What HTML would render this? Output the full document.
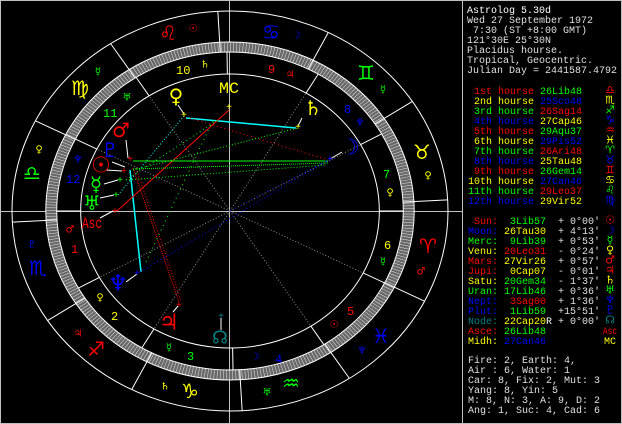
<!DOCTYPE html>
<html><head><meta charset="utf-8"><style>
html,body{margin:0;padding:0;background:#000;}
svg{display:block}
text{white-space:pre}
.p{font-family:"Liberation Mono",monospace;font-size:10px}
.g{font-family:"DejaVu Sans",sans-serif;text-anchor:middle;dominant-baseline:central}
</style></head><body>
<svg width="622" height="424" viewBox="0 0 622 424" xmlns="http://www.w3.org/2000/svg" xml:space="preserve">
<rect x="0" y="0" width="622" height="424" fill="#000"/>
<rect x="0.5" y="0.5" width="621" height="423" fill="none" stroke="#c0c0c0"/>
<line x1="462.5" y1="0" x2="462.5" y2="424" stroke="#c0c0c0"/>
<line x1="0" y1="211.5" x2="462" y2="211.5" stroke="#c0c0c0"/>
<line x1="229.5" y1="0" x2="229.5" y2="424" stroke="#c0c0c0"/>

<g transform="translate(230,211) scale(1.09,1)" fill="none">
<circle r="164" stroke="#686868" stroke-width="10" vector-effect="non-scaling-stroke"/>
<circle r="164" stroke="#e0e0e0" stroke-width="10" stroke-dasharray="0.5 2.362"/>
<g stroke="#fff" stroke-width="1">
<circle r="200" vector-effect="non-scaling-stroke"/>
<circle r="169" vector-effect="non-scaling-stroke"/>
<circle r="159" vector-effect="non-scaling-stroke"/>
<circle r="137" vector-effect="non-scaling-stroke"/>
<line x1="159" x2="200" transform="rotate(26.8)" vector-effect="non-scaling-stroke"/>
<line x1="159" x2="200" transform="rotate(-3.2)" vector-effect="non-scaling-stroke"/>
<line x1="159" x2="200" transform="rotate(-33.2)" vector-effect="non-scaling-stroke"/>
<line x1="159" x2="200" transform="rotate(-63.2)" vector-effect="non-scaling-stroke"/>
<line x1="159" x2="200" transform="rotate(-93.2)" vector-effect="non-scaling-stroke"/>
<line x1="159" x2="200" transform="rotate(-123.2)" vector-effect="non-scaling-stroke"/>
<line x1="159" x2="200" transform="rotate(-153.2)" vector-effect="non-scaling-stroke"/>
<line x1="159" x2="200" transform="rotate(-183.2)" vector-effect="non-scaling-stroke"/>
<line x1="159" x2="200" transform="rotate(-213.2)" vector-effect="non-scaling-stroke"/>
<line x1="159" x2="200" transform="rotate(-243.2)" vector-effect="non-scaling-stroke"/>
<line x1="159" x2="200" transform="rotate(-273.2)" vector-effect="non-scaling-stroke"/>
<line x1="159" x2="200" transform="rotate(-303.2)" vector-effect="non-scaling-stroke"/>
<line x1="137" x2="159" transform="rotate(-180)" vector-effect="non-scaling-stroke"/>
<line x1="137" x2="159" transform="rotate(-209)" vector-effect="non-scaling-stroke"/>
<line x1="137" x2="159" transform="rotate(-239.4)" vector-effect="non-scaling-stroke"/>
<line x1="137" x2="159" transform="rotate(-271)" vector-effect="non-scaling-stroke"/>
<line x1="137" x2="159" transform="rotate(-302.8)" vector-effect="non-scaling-stroke"/>
<line x1="137" x2="159" transform="rotate(-333.1)" vector-effect="non-scaling-stroke"/>
<line x1="137" x2="159" transform="rotate(0)" vector-effect="non-scaling-stroke"/>
<line x1="137" x2="159" transform="rotate(-29)" vector-effect="non-scaling-stroke"/>
<line x1="137" x2="159" transform="rotate(-59.4)" vector-effect="non-scaling-stroke"/>
<line x1="137" x2="159" transform="rotate(-91)" vector-effect="non-scaling-stroke"/>
<line x1="137" x2="159" transform="rotate(-122.8)" vector-effect="non-scaling-stroke"/>
<line x1="137" x2="159" transform="rotate(-153.1)" vector-effect="non-scaling-stroke"/>
</g>
<g stroke="#909090" stroke-dasharray="1 2">
<line x1="0" x2="137" transform="rotate(-209)" vector-effect="non-scaling-stroke"/>
<line x1="0" x2="137" transform="rotate(-239.4)" vector-effect="non-scaling-stroke"/>
<line x1="0" x2="137" transform="rotate(-302.8)" vector-effect="non-scaling-stroke"/>
<line x1="0" x2="137" transform="rotate(-333.1)" vector-effect="non-scaling-stroke"/>
<line x1="0" x2="137" transform="rotate(-29)" vector-effect="non-scaling-stroke"/>
<line x1="0" x2="137" transform="rotate(-59.4)" vector-effect="non-scaling-stroke"/>
<line x1="0" x2="137" transform="rotate(-122.8)" vector-effect="non-scaling-stroke"/>
<line x1="0" x2="137" transform="rotate(-153.1)" vector-effect="non-scaling-stroke"/>
</g>
</g>

<g fill="none">
<polyline points="186,118 296,128" stroke="#00ffff" stroke-width="1.5"/>
<line x1="184" y1="116" x2="118" y2="195" stroke="#00ffff" stroke-dasharray="1 2"/>
<line x1="130" y1="170" x2="141" y2="272" stroke="#00ffff" stroke-width="1.5"/>
<line x1="229" y1="110" x2="117" y2="211" stroke="#ff0000"/>
<line x1="190" y1="118" x2="328" y2="160" stroke="#ff0000" stroke-dasharray="1 3"/>
<line x1="133" y1="168" x2="179" y2="302" stroke="#ff0000" stroke-dasharray="1 1"/>
<line x1="136" y1="168" x2="181" y2="300" stroke="#ff0000" stroke-dasharray="1 2"/>
<line x1="133" y1="161" x2="328" y2="161" stroke="#00ff00"/>
<line x1="133" y1="170" x2="298" y2="128" stroke="#00ff00" stroke-dasharray="1 2"/>
<line x1="133" y1="169" x2="328" y2="163" stroke="#00ff00" stroke-dasharray="1 1"/>
<line x1="126" y1="180" x2="326" y2="165" stroke="#00ff00" stroke-dasharray="1 2"/>
<line x1="126" y1="180" x2="218" y2="120" stroke="#00ff00" stroke-dasharray="1 3"/>
<line x1="146" y1="262" x2="214" y2="118" stroke="#00ff00" stroke-dasharray="1 4"/>
<line x1="140" y1="272" x2="330" y2="159" stroke="#0000ff" stroke-dasharray="1 3"/>
<line x1="230" y1="211" x2="330" y2="159" stroke="#0000ff" stroke-dasharray="1 5"/>
</g>
<g stroke="#fff">
<line x1="178" y1="105" x2="184" y2="114"/>
<line x1="302" y1="118" x2="298" y2="126"/>
<line x1="342" y1="152" x2="330" y2="159"/>
<line x1="126" y1="140" x2="128" y2="158"/>
<line x1="112" y1="162" x2="125" y2="167"/>
<line x1="106" y1="170" x2="122" y2="171"/>
<line x1="104" y1="184" x2="118" y2="180"/>
<line x1="100" y1="198" x2="114" y2="195"/>
<line x1="100" y1="218" x2="113" y2="211"/>
<line x1="126" y1="282" x2="137" y2="274"/>
<line x1="173" y1="312" x2="178" y2="306"/>
<line x1="221" y1="330" x2="221" y2="318"/>
</g>
<g font-family="Liberation Mono" font-size="10">
<text x="226" y="110" fill="#ffff00">+</text>
<text x="295" y="130" fill="#ffff00">+</text>
<text x="181" y="118" fill="#ffff00">+</text>
<text x="327" y="162" fill="#0000ff">+</text>
<text x="127" y="162" fill="#ff0000">+</text>
<text x="121" y="174" fill="#ff0000">+</text>
<text x="117" y="183" fill="#00ff00">+</text>
<text x="113" y="198" fill="#00ff00">+</text>
<text x="112" y="214" fill="#ff0000">+</text>
<text x="134" y="276" fill="#0000ff">+</text>
<text x="176" y="308" fill="#ff0000">+</text>
<text x="218" y="319" fill="#008080">+</text>
</g>

<g class="g">
<text x="168" y="33" fill="#ff0000" font-size="20">♌</text><text x="193" y="29" fill="#ff0000" font-size="10">☉</text>
<text x="80" y="88" fill="#ffff00" font-size="20">♍</text><text x="98" y="72" fill="#00ff00" font-size="10">☿</text>
<text x="32" y="173" fill="#00ff00" font-size="20">♎</text><text x="39" y="150" fill="#ffff00" font-size="10">♀</text>
<text x="38" y="268" fill="#0000ff" font-size="20">♏</text><text x="32" y="245" fill="#0000ff" font-size="10">♇</text>
<text x="96" y="349" fill="#ff0000" font-size="20">♐</text><text x="78" y="334" fill="#ff0000" font-size="10">♃</text>
<text x="190" y="391" fill="#ffff00" font-size="20">♑</text><text x="165" y="387" fill="#ffff00" font-size="10">♄</text>
<text x="291" y="383" fill="#00ff00" font-size="20">♒</text><text x="267" y="393" fill="#00ff00" font-size="10">♅</text>
<text x="381" y="336" fill="#0000ff" font-size="20">♓</text><text x="362" y="351" fill="#0000ff" font-size="10">♆</text>
<text x="428" y="246" fill="#ff0000" font-size="20">♈</text><text x="421" y="272" fill="#ff0000" font-size="10">♂</text>
<text x="422" y="152" fill="#ffff00" font-size="20">♉</text><text x="428" y="176" fill="#ffff00" font-size="10">♀</text>
<text x="366" y="73" fill="#00ff00" font-size="20">♊</text><text x="383" y="90" fill="#00ff00" font-size="10">☿</text>
<text x="271" y="32" fill="#0000ff" font-size="20">♋</text><text x="296" y="36" fill="#0000ff" font-size="10">☽</text>
<text x="205" y="65" fill="#ffff00" font-size="10">♄</text>
<text x="127" y="98" fill="#00ff00" font-size="10">♅</text>
<text x="78" y="160" fill="#0000ff" font-size="10">♆</text>
<text x="70" y="230" fill="#ff0000" font-size="10">♂</text>
<text x="100" y="298" fill="#ffff00" font-size="10">♀</text>
<text x="169" y="348" fill="#00ff00" font-size="10">☿</text>
<text x="255" y="357" fill="#0000ff" font-size="10">☽</text>
<text x="334" y="325" fill="#ff0000" font-size="10">☉</text>
<text x="383" y="262" fill="#00ff00" font-size="10">☿</text>
<text x="390" y="193" fill="#ffff00" font-size="10">♀</text>
<text x="360" y="123" fill="#0000ff" font-size="10">♆</text>
<text x="290" y="75" fill="#ff0000" font-size="10">♃</text>
<text x="176" y="96" fill="#ffff00" font-size="20">♀</text>
<text x="313" y="108" fill="#ffff00" font-size="20">♄</text>
<text x="350" y="148" fill="#0000ff" font-size="22">☽</text>
<text x="121" y="130" fill="#ff0000" font-size="20">♂</text>
<text x="110" y="150" fill="#0000ff" font-size="20">♇</text>
<text x="101" y="166" fill="#ff0000" font-size="22">☉</text>
<text x="96" y="184" fill="#00ff00" font-size="20">☿</text>
<text x="92" y="203" fill="#00ff00" font-size="20">♅</text>
<text x="118" y="284" fill="#0000ff" font-size="22">♆</text>
<text x="169" y="323" fill="#ff0000" font-size="22">♃</text>
<text x="220" y="338" fill="#008080" font-size="18">☊</text>
</g>
<g font-family="Liberation Mono" font-size="16">
<text x="219" y="93" fill="#ffff00" textLength="20" lengthAdjust="spacingAndGlyphs">MC</text>
<text x="82" y="228" fill="#ff0000" textLength="20" lengthAdjust="spacingAndGlyphs">Asc</text>
</g>
<g font-family="Liberation Mono" font-size="12">
<text x="176" y="74" fill="#ffff00">10</text>
<text x="103" y="117" fill="#00ff00">11</text>
<text x="66" y="183" fill="#0000ff">12</text>
<text x="71" y="253" fill="#ff0000">1</text>
<text x="111" y="320" fill="#ffff00">2</text>
<text x="187" y="360" fill="#00ff00">3</text>
<text x="275" y="363" fill="#0000ff">4</text>
<text x="347" y="315" fill="#ff0000">5</text>
<text x="384" y="249" fill="#ffff00">6</text>
<text x="383" y="178" fill="#00ff00">7</text>
<text x="344" y="113" fill="#0000ff">8</text>
<text x="268" y="73" fill="#ff0000">9</text>
</g>

<g class="p" fill="#e0e0e0">
<text x="467" y="13" fill="#fff">Astrolog 5.30d</text>
<text x="467" y="23">Wed 27 September 1972</text>
<text x="467" y="33"> 7:30 (ST +8:00 GMT)</text>
<text x="467" y="43">121°30E 25°30N</text>
<text x="467" y="53">Placidus hourse.</text>
<text x="467" y="63">Tropical, Geocentric.</text>
<text x="467" y="73">Julian Day = 2441587.4792</text>
</g>
<g class="p">
<text x="474" y="94" fill="#ff0000">1st hourse</text><text x="540" y="94" fill="#00ff00">26Lib48</text>
<text x="474" y="104" fill="#ffff00">2nd hourse</text><text x="540" y="104" fill="#0000ff">25Sco48</text>
<text x="474" y="114" fill="#00ff00">3rd hourse</text><text x="540" y="114" fill="#ff0000">26Sag14</text>
<text x="474" y="124" fill="#0000ff">4th hourse</text><text x="540" y="124" fill="#ffff00">27Cap46</text>
<text x="474" y="134" fill="#ff0000">5th hourse</text><text x="540" y="134" fill="#00ff00">29Aqu37</text>
<text x="474" y="144" fill="#ffff00">6th hourse</text><text x="540" y="144" fill="#0000ff">29Pis52</text>
<text x="474" y="154" fill="#00ff00">7th hourse</text><text x="540" y="154" fill="#ff0000">26Ari48</text>
<text x="474" y="164" fill="#0000ff">8th hourse</text><text x="540" y="164" fill="#ffff00">25Tau48</text>
<text x="474" y="174" fill="#ff0000">9th hourse</text><text x="540" y="174" fill="#00ff00">26Gem14</text>
<text x="468" y="184" fill="#ffff00">10th hourse</text><text x="540" y="184" fill="#0000ff">27Can46</text>
<text x="468" y="194" fill="#00ff00">11th hourse</text><text x="540" y="194" fill="#ff0000">29Leo37</text>
<text x="468" y="204" fill="#0000ff">12th hourse</text><text x="540" y="204" fill="#ffff00">29Vir52</text>
</g>
<g class="g" font-size="11">
<text x="610" y="90" fill="#ff0000">♎</text><text x="610" y="100" fill="#ffff00">♏</text>
<text x="610" y="110" fill="#00ff00">♐</text><text x="610" y="120" fill="#0000ff">♑</text>
<text x="610" y="130" fill="#ff0000">♒</text><text x="610" y="140" fill="#ffff00">♓</text>
<text x="610" y="150" fill="#00ff00">♈</text><text x="610" y="160" fill="#0000ff">♉</text>
<text x="610" y="170" fill="#ff0000">♊</text><text x="610" y="180" fill="#ffff00">♋</text>
<text x="610" y="190" fill="#00ff00">♌</text><text x="610" y="200" fill="#0000ff">♍</text>
<text x="610" y="220" fill="#ff0000">☉</text><text x="610" y="230" fill="#0000ff">☽</text>
<text x="610" y="240" fill="#00ff00">☿</text><text x="610" y="250" fill="#ffff00">♀</text>
<text x="610" y="260" fill="#ff0000">♂</text><text x="610" y="270" fill="#ff0000">♃</text>
<text x="610" y="280" fill="#ffff00">♄</text><text x="610" y="290" fill="#00ff00">♅</text>
<text x="610" y="300" fill="#0000ff">♆</text><text x="610" y="310" fill="#0000ff">♇</text>
<text x="610" y="320" fill="#008080">☊</text>
</g>
<g class="p" font-size="9">
<text x="603" y="334" fill="#ff0000" textLength="14" lengthAdjust="spacingAndGlyphs">Asc</text><text x="604" y="344" fill="#ffff00">MC</text>
</g>
<g class="p">
<text x="474" y="224" fill="#ff0000">Sun:</text><text x="504" y="224" fill="#00ff00"> 3Lib57</text><text x="552" y="224" fill="#e0e0e0"> + 0°00'</text>
<text x="468" y="234" fill="#0000ff">Moon:</text><text x="504" y="234" fill="#ffff00">26Tau30</text><text x="552" y="234" fill="#e0e0e0"> + 4°13'</text>
<text x="468" y="244" fill="#00ff00">Merc:</text><text x="504" y="244" fill="#00ff00"> 9Lib39</text><text x="552" y="244" fill="#e0e0e0"> + 0°53'</text>
<text x="468" y="254" fill="#ffff00">Venu:</text><text x="504" y="254" fill="#ff0000">20Leo31</text><text x="552" y="254" fill="#e0e0e0"> - 0°24'</text>
<text x="468" y="264" fill="#ff0000">Mars:</text><text x="504" y="264" fill="#ffff00">27Vir26</text><text x="552" y="264" fill="#e0e0e0"> + 0°57'</text>
<text x="468" y="274" fill="#ff0000">Jupi:</text><text x="504" y="274" fill="#ffff00"> 0Cap07</text><text x="552" y="274" fill="#e0e0e0"> - 0°01'</text>
<text x="468" y="284" fill="#ffff00">Satu:</text><text x="504" y="284" fill="#00ff00">20Gem34</text><text x="552" y="284" fill="#e0e0e0"> - 1°37'</text>
<text x="468" y="294" fill="#00ff00">Uran:</text><text x="504" y="294" fill="#00ff00">17Lib46</text><text x="552" y="294" fill="#e0e0e0"> + 0°36'</text>
<text x="468" y="304" fill="#0000ff">Nept:</text><text x="504" y="304" fill="#ff0000"> 3Sag00</text><text x="552" y="304" fill="#e0e0e0"> + 1°36'</text>
<text x="468" y="314" fill="#0000ff">Plut:</text><text x="504" y="314" fill="#00ff00"> 1Lib59</text><text x="552" y="314" fill="#e0e0e0"> +15°51'</text>
<text x="468" y="324" fill="#008080">Node:</text><text x="504" y="324" fill="#ffff00">22Cap20</text><text x="546" y="324" fill="#fff">R</text><text x="552" y="324" fill="#e0e0e0"> + 0°00'</text>
<text x="468" y="334" fill="#ff0000">Asce:</text><text x="504" y="334" fill="#00ff00">26Lib48</text>
<text x="468" y="344" fill="#ffff00">Midh:</text><text x="504" y="344" fill="#0000ff">27Can46</text>
</g>
<g class="p" fill="#e0e0e0">
<text x="468" y="363">Fire: 2, Earth: 4,</text>
<text x="468" y="373">Air : 6, Water: 1</text>
<text x="468" y="383">Car: 8, Fix: 2, Mut: 3</text>
<text x="468" y="393">Yang: 8, Yin: 5</text>
<text x="468" y="403">M: 8, N: 3, A: 9, D: 2</text>
<text x="468" y="413">Ang: 1, Suc: 4, Cad: 6</text>
</g>
</svg>
</body></html>
